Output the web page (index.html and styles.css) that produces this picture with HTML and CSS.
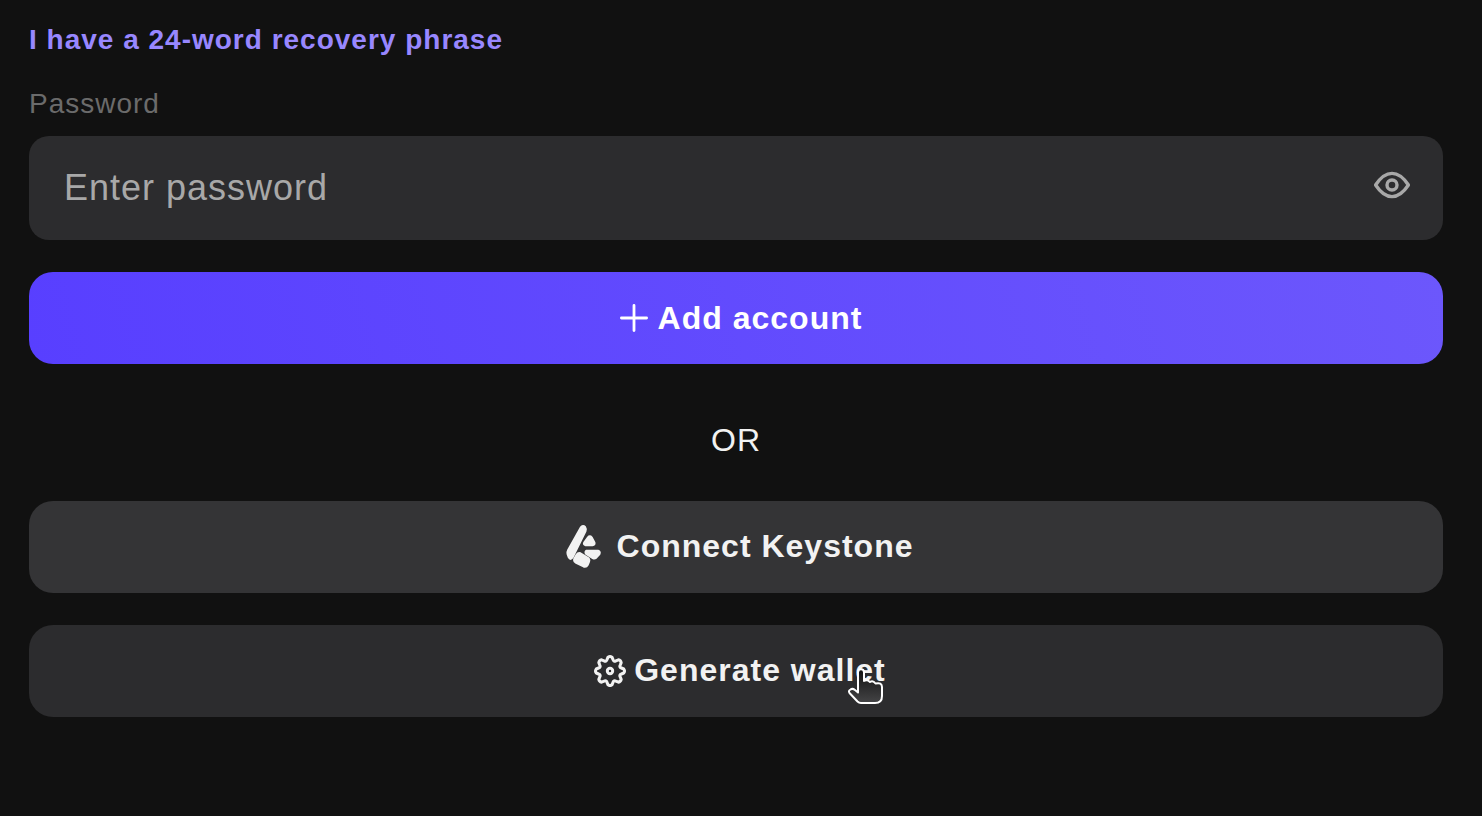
FILE: index.html
```html
<!DOCTYPE html>
<html lang="en">
<head>
<meta charset="utf-8">
<meta name="viewport" content="width=device-width, initial-scale=1">
<title>Add account</title>
<link rel="stylesheet" href="styles.css">
</head>
<body>
<main class="page">
  <a class="phrase-link" href="#">I have a 24-word recovery phrase</a>
  <form class="form">
    <label class="label" for="password">Password</label>
    <div class="field">
      <input class="input" id="password" type="password" placeholder="Enter password">
      <button class="reveal" type="button" aria-label="Show password">
        <svg width="38" height="30" viewBox="0 0 38 30" fill="none" stroke="currentColor" stroke-width="3.4" stroke-linejoin="round">
          <path d="M2.6 15C7.2 8 12.6 3.4 19 3.4S30.8 8 35.4 15C30.8 22 25.400 26.600 19 26.600S7.200 22 2.600 15Z"/>
          <circle cx="19" cy="15" r="5"/>
        </svg>
      </button>
    </div>
    <button class="button primary" type="button">
      <svg width="28" height="28" viewBox="0 0 28 28" fill="none" stroke="currentColor" stroke-width="2.800" stroke-linecap="round"><path d="M14 1.400V26.600M1.400 14H26.600"/></svg>
      <span>Add account</span>
    </button>
  </form>
  <p class="divider">OR</p>
  <div class="alternatives">
    <button class="button secondary keystone" type="button">
      <svg width="36" height="46" viewBox="-1 -2 36 46" fill="currentColor" stroke="currentColor" stroke-width="3" stroke-linejoin="round">
        <path d="M15.200 2.800Q17 .6 18.700 2.400Q19.900 4 19 6.200L6.200 32.200Q4.400 34.600 3.200 32.200L2 28.800Q1.600 27.200 2.600 25.200Z"/>
        <path d="M22.400 12.700Q23.800 10.900 25.300 12.700L28 17.800Q28.400 19.700 26.600 19.700H19.600Q17.900 19.400 18.600 17.900Z"/>
        <path d="M20.800 26.200H32Q34 26.700 32.900 29L29.900 32.300Q28.500 33.500 27 32.700L20.400 28.500Q19.400 26.900 20.800 26.200Z"/>
        <path d="M14.200 28.700L21.600 33.200Q23.400 34.600 22.500 36.800L21.400 39.500Q20 41.900 17.700 41L9.900 37.100Q8 35.800 8.900 33.700L11 30.100Q12.400 27.900 14.200 28.700Z"/>
      </svg>
      <span>Connect Keystone</span>
    </button>
    <button class="button secondary active" type="button">
      <svg width="34" height="34" viewBox="-18 -18 34 34" fill="none" stroke="currentColor" stroke-width="3" stroke-linejoin="round">
        <path d="M-2-13.800Q0-15.200 2-13.800L3-11.400Q3.750-9.100 5.900-10.200L8.400-11.200Q10.700-10.700 11.200-8.400L10.200-5.900Q9.100-3.750 11.400-3L13.800-2Q15.200 0 13.800 2L11.400 3Q9.100 3.750 10.200 5.900L11.200 8.400Q10.700 10.700 8.400 11.200L5.900 10.200Q3.750 9.100 3 11.400L2 13.800Q0 15.200-2 13.800L-3 11.400Q-3.750 9.100-5.900 10.200L-8.400 11.200Q-10.700 10.700-11.200 8.400L-10.200 5.900Q-9.100 3.750-11.400 3L-13.800 2Q-15.200 0-13.800-2L-11.400-3Q-9.100-3.750-10.200-5.900L-11.200-8.400Q-10.700-10.700-8.400-11.200L-5.900-10.200Q-3.750-9.100-3-11.400Z"/>
        <circle r="2.700"/>
      </svg>
      <span class="wallet">Generate wallet
        <svg class="pointer" width="38" height="38" viewBox="0 0 38 38" stroke="#fff" stroke-width="2" stroke-linejoin="round" aria-hidden="true">
          <defs><linearGradient id="hand" x1="0" y1="0" x2="0" y2="1"><stop stop-color="#111"/><stop offset="1" stop-color="#444446"/></linearGradient></defs>
          <path fill="url(#hand)" d="M11 25.500V5.500C11 1.200 17 1.200 17 5.500V14Q20 12.200 23 15Q26 13 28.500 16.500Q35 15 35 20V29Q35 36 28 36H14Q12 36 10.500 34.500L2.500 26Q1 24 3.500 22.500Q5.500 21 8 23Z"/>
        </svg>
      </span>
    </button>
  </div>
</main>
</body>
</html>
```

FILE: styles.css
```css
* { box-sizing: border-box; }

body {
  margin: 0;
  min-height: 100vh;
  background: #111;
  color: #f2f2f2;
  font-family: "Liberation Sans", Arial, sans-serif;
  font-size: 32px;
  letter-spacing: 1px;
}

button, input { font: inherit; letter-spacing: inherit; }

.page {
  display: flex;
  flex-direction: column;
  padding: 24px 39px 24px 29px;
}

.phrase-link {
  align-self: flex-start;
  color: #9887ff;
  font-size: 28px;
  font-weight: 700;
  line-height: 32px;
  text-decoration: none;
}

.form {
  display: flex;
  flex-direction: column;
  margin-top: 32px;
}

.label {
  color: #6b6b6b;
  font-size: 28px;
  line-height: 32px;
}

.field {
  display: flex;
  align-items: center;
  height: 104px;
  margin: 16px 0 32px;
  padding: 0 32px 0 35px;
  border-radius: 20px;
  background: #2c2c2e;
}

.input {
  flex: 1;
  min-width: 0;
  padding: 0;
  border: 0;
  outline: 0;
  background: none;
  color: #f2f2f2;
  font-size: 36px;
}

.input::placeholder { color: #a8a8a8; opacity: 1; }

.reveal {
  display: flex;
  padding: 0 0 6px;
  border: 0;
  background: none;
  color: #a8a8a8;
}

.button {
  display: flex;
  align-items: center;
  justify-content: center;
  width: 100%;
  height: 92px;
  border: 0;
  border-radius: 24px;
  color: #f2f2f2;
  font-weight: 700;
}

.primary {
  gap: 10px;
  padding: 0 0 0 10px;
  background: linear-gradient(75deg, #583fff, #6c57fc);
  color: #fff;
}

.secondary {
  gap: 8px;
  padding: 0 0 2px 6px;
  background: #343436;
}

.active { background: #2c2c2e; }
.keystone { gap: 16px; }

.divider {
  margin: 58px 0 42px;
  line-height: 37px;
  text-align: center;
}

.alternatives {
  display: flex;
  flex-direction: column;
  gap: 32px;
}

.wallet { position: relative; }

.pointer {
  position: absolute;
  right: 1px;
  top: 15px;
}
```
